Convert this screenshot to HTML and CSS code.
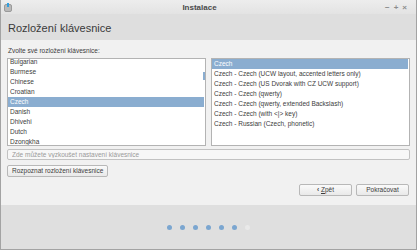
FILE: index.html
```html
<!DOCTYPE html>
<html lang="cs">

<head>
    <meta charset="utf-8">
    <title>Instalace</title>
    <link rel="stylesheet" href="styles.css">
</head>

<body>
    <div class="window">
        <div class="titlebar">
            <div class="app_icon">
                <svg width="8" height="9" viewBox="0 0 8 9">
                    <rect x="0.5" y="1.5" width="7" height="7" rx="1.5" fill="#b9b9b9" stroke="#9a9a9a"/>
                    <rect x="3" y="0" width="2" height="4" fill="#2f9fe0"/>
                </svg>
            </div>
            <div class="title">Instalace</div>
            <div class="controls">
                <span>&minus;</span>
                <span>+</span>
                <span>&times;</span>
            </div>
        </div>

        <div class="header">
            <h1>Rozložení klávesnice</h1>
        </div>

        <div class="content">
            <p class="label">Zvolte své rozložení klávesnice:</p>
            <div class="lists">
                <div class="list">
                    <div class="list_inner scrolled">
                        <div class="row">Bulgarian</div>
                        <div class="row">Burmese</div>
                        <div class="row">Chinese</div>
                        <div class="row">Croatian</div>
                        <div class="row valgt">Czech</div>
                        <div class="row">Danish</div>
                        <div class="row">Dhivehi</div>
                        <div class="row">Dutch</div>
                        <div class="row">Dzongkha</div>
                    </div>
                    <div class="scroll_thumb"></div>
                </div>
                <div class="list">
                    <div class="list_inner">
                        <div class="row valgt">Czech</div>
                        <div class="row">Czech - Czech (UCW layout, accented letters only)</div>
                        <div class="row">Czech - Czech (US Dvorak with CZ UCW support)</div>
                        <div class="row">Czech - Czech (qwerty)</div>
                        <div class="row">Czech - Czech (qwerty, extended Backslash)</div>
                        <div class="row">Czech - Czech (with &lt;|&gt; key)</div>
                        <div class="row">Czech - Russian (Czech, phonetic)</div>
                    </div>
                </div>
            </div>
            <input class="test_input" type="text" placeholder="Zde můžete vyzkoušet nastavení klávesnice">
            <div class="detect">
                <button class="btn">Rozpoznat rozložení klávesnice</button>
            </div>
            <div class="nav">
                <button class="btn nav_btn"><span class="arrow">&lsaquo;</span> <u>Z</u>pět</button>
                <button class="btn nav_btn">Pokračovat</button>
            </div>
        </div>

        <div class="footer">
            <span class="dot"></span>
            <span class="dot"></span>
            <span class="dot"></span>
            <span class="dot"></span>
            <span class="dot"></span>
            <span class="dot"></span>
            <span class="dot off"></span>
        </div>
    </div>
</body>

</html>
```

FILE: styles.css
```css
body {
    margin: 0;
    background-color: #f2f2f2;
    font-family: "Liberation Sans", Arial, sans-serif;
    color: #3c3c3c;
}

.window {
    width: 417px;
    height: 250px;
    box-sizing: border-box;
    border: 1px solid #a3a3a3;
    border-top: none;
    display: flex;
    flex-direction: column;
    overflow: hidden;
}

.titlebar {
    height: 14px;
    display: flex;
    align-items: center;
    background: linear-gradient(#ededed, #e3e3e3);
}

.app_icon {
    width: 13px;
    padding-left: 3px;
    box-sizing: border-box;
    display: flex;
    align-items: center;
}

.title {
    flex: 1;
    text-align: center;
    font-size: 8px;
    font-weight: bold;
    color: #4a4a4a;
}

.controls {
    width: 31px;
    display: flex;
    gap: 4px;
    font-size: 8px;
    color: #8c8c8c;
    font-weight: bold;
}

.header {
    height: 26px;
    background-color: #dedede;
    display: flex;
    align-items: center;
    padding-left: 7px;
}

h1 {
    margin: 0;
    font-size: 11px;
    font-weight: normal;
    color: #3a3a3a;
    padding-top: 2px;
}

.content {
    flex: 1;
    background-color: #f1f1f1;
    padding: 6px 6px 0 6px;
    display: flex;
    flex-direction: column;
}

.label {
    margin: 0 0 2px 1px;
    font-size: 6.5px;
    line-height: 10px;
}

.lists {
    display: grid;
    grid-template-columns: 1fr 1fr;
    gap: 5px;
}

.list {
    position: relative;
    height: 86px;
    background-color: white;
    border: 1px solid #b3b3b3;
    overflow: hidden;
}

.scrolled {
    margin-top: -2px;
}

.row {
    height: 10px;
    line-height: 10px;
    font-size: 6.5px;
    padding-left: 2px;
    white-space: nowrap;
}

.row.valgt {
    background-color: #8aadd0;
    color: white;
    margin-right: 1px;
}

.scroll_thumb {
    position: absolute;
    right: 0;
    top: 13px;
    width: 2px;
    height: 8px;
    background-color: #8aadd0;
}

.test_input {
    margin-top: 3px;
    height: 11px;
    box-sizing: border-box;
    border: 1px solid #c2c2c2;
    border-radius: 2px;
    background-color: #f7f7f7;
    padding: 0 4px;
    font-family: "Liberation Sans", Arial, sans-serif;
    font-size: 6.5px;
}

.test_input::placeholder {
    color: #9a9a9a;
}

.detect {
    margin-top: 5px;
    display: flex;
}

.btn {
    height: 12px;
    padding: 0 4px;
    border: 1px solid #b8b8b8;
    border-radius: 2px;
    background: linear-gradient(#fafafa, #e9e9e9);
    font-family: "Liberation Sans", Arial, sans-serif;
    font-size: 6.5px;
    color: #3c3c3c;
    line-height: 10px;
}

.nav {
    margin-top: 7px;
    display: flex;
    justify-content: flex-end;
    gap: 4px;
    padding-right: 1px;
}

.nav_btn {
    width: 53px;
}

.arrow {
    font-weight: bold;
}

.footer {
    height: 44px;
    background-color: #dfdfdf;
    display: flex;
    justify-content: center;
    align-items: center;
    gap: 8px;
}

.dot {
    width: 5px;
    height: 5px;
    border-radius: 50%;
    background-color: #7ba6d0;
}

.dot.off {
    background-color: #e9e9e9;
}
```
